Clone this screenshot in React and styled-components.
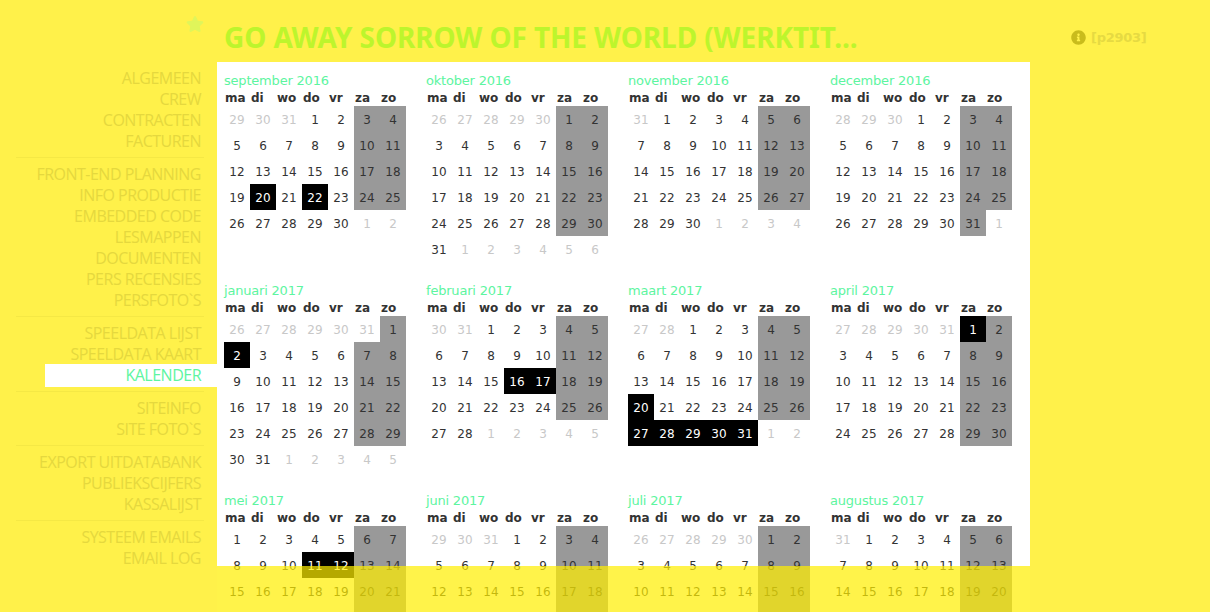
import React from 'react';
import styled, { createGlobalStyle } from 'styled-components';
import { FaInfoCircle, FaStar } from 'react-icons/fa';

const Global = createGlobalStyle`
  html, body { margin: 0; padding: 0; height: 612px; overflow: hidden; background: #fff14a; }
`;

const Page = styled.div`
  display: grid;
  grid-template-columns: 217px 813px 180px;
  grid-template-rows: 62px 550px;
  width: 1210px;
  height: 612px;
  overflow: hidden;
`;

const StarCell = styled.div`
  display: flex;
  justify-content: flex-end;
  padding: 15px 13px 0 0;
  color: #e0f55a;
  font-size: 18px;
`;

const Title = styled.h1`
  margin: 0;
  padding: 18px 0 0 7px;
  font: bold 28px/38px "Noto Sans", sans-serif;
  letter-spacing: -0.1px;
  color: #bdf52c;
  white-space: nowrap;
  overflow: hidden;
`;

const Code = styled.div`
  display: flex;
  align-items: flex-start;
  gap: 5px;
  padding: 30px 0 0 41px;
  font: bold 13px/15px "DejaVu Sans", sans-serif;
  letter-spacing: -0.3px;
  color: #e6da42;
  svg { color: #c9bc1c; font-size: 15px; }
`;

const Nav = styled.nav`
  display: flex;
  flex-direction: column;
  padding-top: 6px;
`;

const NavGroup = styled.div`
  display: flex;
  flex-direction: column;
  margin-left: 16px;
  margin-right: 13px;
  padding-bottom: 5px;
  margin-bottom: 6px;
  border-bottom: 1px solid ${p => (p.$last ? 'transparent' : '#f5e845')};
`;

const NavItem = styled.a`
  display: block;
  flex: none;
  height: ${p => (p.$active ? '23px' : '21px')};
  margin: ${p => (p.$active ? '-1px -13px -1px 29px' : '0')};
  padding-right: ${p => (p.$active ? '16px' : '3px')};
  background: ${p => (p.$active ? '#fff' : 'transparent')};
  color: ${p => (p.$active ? '#5df5a0' : '#e5d83e')};
  font: 16px/${p => (p.$active ? '23px' : '21px')} "Open Sans", sans-serif;
  letter-spacing: -0.5px;
  text-align: right;
  white-space: nowrap;
`;

const Panel = styled.main`
  background: #fff;
  display: grid;
  grid-template-columns: repeat(4, 202px);
  align-content: start;
  padding: 10px 0 0 7px;
  overflow: hidden;
`;

const Month = styled.section`
  width: 182px;
  height: 200px;
  margin-bottom: 10px;
  font-family: "DejaVu Sans", sans-serif;
`;

const MonthName = styled.div`
  height: 18px;
  font-size: 13px;
  line-height: 18px;
  letter-spacing: -0.2px;
  color: #5df5a0;
`;

const Week = styled.div`
  display: grid;
  grid-template-columns: repeat(7, 26px);
`;

const DayName = styled.div`
  height: 16px;
  padding-left: 1px;
  font-size: 12px;
  font-weight: bold;
  line-height: 16px;
  color: #333;
`;

const Day = styled.div`
  height: 26px;
  font-size: 12px;
  line-height: 28px;
  text-align: center;
  color: ${p => (p.$kind === 'other' ? '#c8c8c8' : p.$kind === 'mark' ? '#fff' : '#333')};
  background: ${p => (p.$kind === 'mark' ? '#000' : p.$kind === 'weekend' ? '#999' : 'transparent')};
`;

const Fade = styled.div`
  position: fixed;
  left: 217px;
  width: 813px;
  top: 566px;
  bottom: 0;
  background: rgba(255, 238, 0, 0.71);
`;

const groups = [
  ['ALGEMEEN', 'CREW', 'CONTRACTEN', 'FACTUREN'],
  ['FRONT-END PLANNING', 'INFO PRODUCTIE', 'EMBEDDED CODE', 'LESMAPPEN', 'DOCUMENTEN', 'PERS RECENSIES', 'PERSFOTO`S'],
  ['SPEELDATA LIJST', 'SPEELDATA KAART', 'KALENDER'],
  ['SITEINFO', 'SITE FOTO`S'],
  ['EXPORT UITDATABANK', 'PUBLIEKSCIJFERS', 'KASSALIJST'],
  ['SYSTEEM EMAILS', 'EMAIL LOG'],
];

const months = [
  ['september 2016', 2016, 8], ['oktober 2016', 2016, 9], ['november 2016', 2016, 10], ['december 2016', 2016, 11],
  ['januari 2017', 2017, 0], ['februari 2017', 2017, 1], ['maart 2017', 2017, 2], ['april 2017', 2017, 3],
  ['mei 2017', 2017, 4], ['juni 2017', 2017, 5], ['juli 2017', 2017, 6], ['augustus 2017', 2017, 7],
];

const marks = {
  '2016-8': [20, 22],
  '2017-0': [2],
  '2017-1': [16, 17],
  '2017-2': [20, 27, 28, 29, 30, 31],
  '2017-3': [1],
  '2017-4': [11, 12],
};

const dayNames = ['ma', 'di', 'wo', 'do', 'vr', 'za', 'zo'];

function cells(year, month) {
  const first = new Date(Date.UTC(year, month, 1));
  const lead = (first.getUTCDay() + 6) % 7;
  const last = new Date(Date.UTC(year, month + 1, 0)).getUTCDate();
  const count = Math.ceil((lead + last) / 7) * 7;
  const out = [];
  for (let i = 0; i < count; i++) {
    const d = new Date(Date.UTC(year, month, 1 - lead + i));
    const day = d.getUTCDate();
    let kind = 'plain';
    if (d.getUTCMonth() !== month) kind = 'other';
    else if ((marks[`${year}-${month}`] || []).includes(day)) kind = 'mark';
    else if (i % 7 >= 5) kind = 'weekend';
    out.push({ day, kind, key: i });
  }
  return out;
}

export default function App() {
  return (
    <Page>
      <Global />
      <StarCell><FaStar /></StarCell>
      <Title>GO AWAY SORROW OF THE WORLD (WERKTIT...</Title>
      <Code><FaInfoCircle /> [p2903]</Code>
      <Nav>
        {groups.map((g, i) => (
          <NavGroup key={i} $last={i === groups.length - 1}>
            {g.map(item => <NavItem key={item} $active={item === 'KALENDER'}>{item}</NavItem>)}
          </NavGroup>
        ))}
      </Nav>
      <Panel>
        {months.map(([name, y, m]) => (
          <Month key={name}>
            <MonthName>{name}</MonthName>
            <Week>{dayNames.map(d => <DayName key={d}>{d}</DayName>)}</Week>
            <Week>{cells(y, m).map(c => <Day key={c.key} $kind={c.kind}>{c.day}</Day>)}</Week>
          </Month>
        ))}
      </Panel>
      <Fade />
    </Page>
  );
}
